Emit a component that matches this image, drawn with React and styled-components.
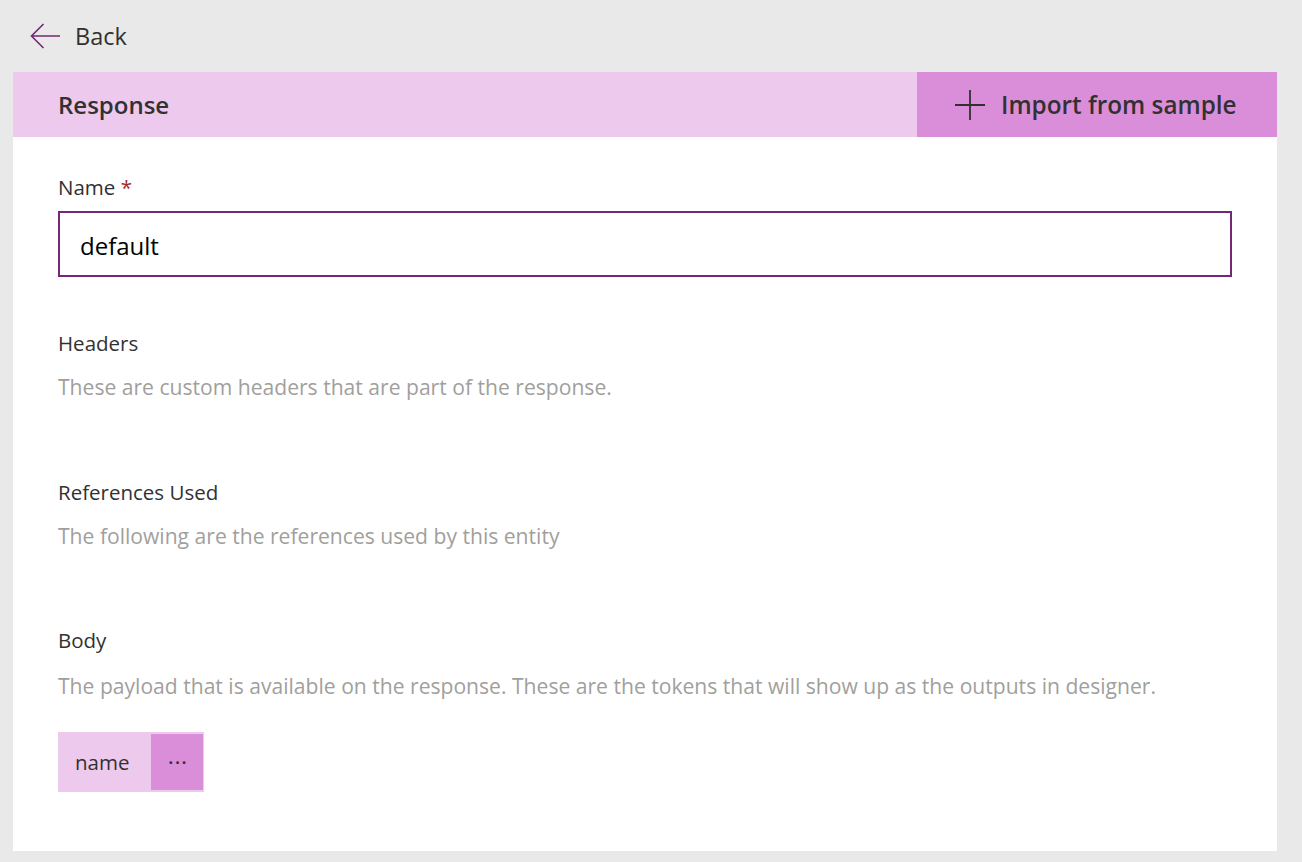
import React from "react";
import styled, { createGlobalStyle } from "styled-components";

const GlobalStyle = createGlobalStyle`
  html, body {
    margin: 0;
    padding: 0;
    background: #e9e9e9;
    font-family: "Open Sans", "Noto Sans", sans-serif;
    color: #323130;
  }
`;

const Page = styled.div`
  width: 1302px;
  height: 862px;
  background: #e9e9e9;
  overflow: hidden;
`;

const TopBar = styled.div`
  height: 72px;
  display: flex;
  align-items: center;
  padding-left: 30px;
`;

const BackLink = styled.button`
  display: flex;
  align-items: center;
  gap: 14px;
  border: none;
  background: none;
  padding: 0;
  font-family: inherit;
  font-size: 23.5px;
  color: #323130;
  cursor: pointer;
`;

const Panel = styled.div`
  margin-left: 13px;
  width: 1264px;
  background: #ffffff;
`;

const PanelHeader = styled.div`
  height: 65px;
  display: flex;
  align-items: stretch;
  background: #edc9ed;
`;

const Title = styled.div`
  flex: 1;
  display: flex;
  align-items: center;
  padding-left: 45px;
  font-size: 24px;
  font-weight: 600;
`;

const ImportButton = styled.button`
  width: 360px;
  display: flex;
  align-items: center;
  gap: 16px;
  padding-left: 38px;
  border: none;
  background: #da8eda;
  font-family: inherit;
  font-size: 24.3px;
  font-weight: 600;
  color: #323130;
  cursor: pointer;
`;

const Content = styled.div`
  padding: 36px 45px 59px;
`;

const Label = styled.div`
  font-size: 20.5px;
  line-height: 28px;
  margin-top: ${(p) => p.$top || 0}px;
`;

const Required = styled.span`
  color: #a4262c;
`;

const Description = styled.div`
  font-size: 21.1px;
  line-height: 28px;
  color: #a19f9d;
  margin-top: ${(p) => p.$top || 16}px;
`;

const Input = styled.input`
  display: block;
  box-sizing: border-box;
  margin-top: 10px;
  width: 1174px;
  height: 66px;
  border: 2px solid #742774;
  padding: 3px 20px 0;
  font-family: inherit;
  font-size: 24px;
  color: #000;
  outline: none;
`;

const Chip = styled.div`
  margin-top: 32px;
  display: inline-flex;
  align-items: stretch;
  height: 60px;
  background: #edc9ed;
  box-sizing: border-box;
  padding: 2px 1px 2px 0;
`;

const ChipText = styled.span`
  display: flex;
  align-items: center;
  padding: 0 22px 0 17px;
  font-size: 20.5px;
`;

const ChipMore = styled.button`
  width: 52px;
  border: none;
  background: #da8eda;
  font-family: inherit;
  font-size: 16px;
  font-weight: 700;
  letter-spacing: 2px;
  color: #323130;
  padding: 0 0 0 2px;
  cursor: pointer;
`;

const ArrowIcon = () => (
  <svg width="31" height="26" viewBox="0 0 31 26" fill="none">
    <path d="M30 13H1.5M13.5 1L1.5 13L13.5 25" stroke="#742774" strokeWidth="1.6" />
  </svg>
);

const PlusIcon = () => (
  <svg width="30" height="30" viewBox="0 0 30 30" fill="none">
    <path d="M15 0V30M0 15H30" stroke="#323130" strokeWidth="1.8" />
  </svg>
);

const App = () => {
  return (
    <Page>
      <GlobalStyle />
      <TopBar>
        <BackLink>
          <ArrowIcon />
          Back
        </BackLink>
      </TopBar>
      <Panel>
        <PanelHeader>
          <Title>Response</Title>
          <ImportButton>
            <PlusIcon />
            Import from sample
          </ImportButton>
        </PanelHeader>
        <Content>
          <Label>
            Name <Required>*</Required>
          </Label>
          <Input defaultValue="default" />

          <Label $top={52}>Headers</Label>
          <Description>These are custom headers that are part of the response.</Description>

          <Label $top={77}>References Used</Label>
          <Description>The following are the references used by this entity</Description>

          <Label $top={76}>Body</Label>
          <Description $top={18}>
            The payload that is available on the response. These are the tokens that will show up as the outputs in designer.
          </Description>

          <Chip>
            <ChipText>name</ChipText>
            <ChipMore>···</ChipMore>
          </Chip>
        </Content>
      </Panel>
    </Page>
  );
};

export default App;
